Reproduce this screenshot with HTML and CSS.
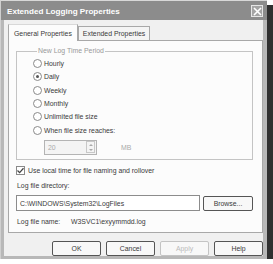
FILE: index.html
```html
<!DOCTYPE html>
<html lang="en">
<head>
    <meta charset="UTF-8">
    <title>Extended Logging Properties</title>
    <link rel="stylesheet" href="styles.css">
</head>
<body>

    <div class="window">
        <div class="titlebar">
            <span class="title">Extended Logging Properties</span>
            <span class="close">
                <svg width="9" height="9" viewBox="0 0 9 9"><path d="M1 1 L8 8 M8 1 L1 8" stroke="#fff" stroke-width="1.6"/></svg>
            </span>
        </div>

        <div class="client">
            <div class="tabs">
                <div class="tab active">General Properties</div>
                <div class="tab">Extended Properties</div>
            </div>

            <div class="panel">
                <fieldset class="group">
                    <legend>New Log Time Period</legend>
                    <div class="radio"><span class="dot"></span>Hourly</div>
                    <div class="radio checked"><span class="dot"></span>Daily</div>
                    <div class="radio"><span class="dot"></span>Weekly</div>
                    <div class="radio"><span class="dot"></span>Monthly</div>
                    <div class="radio"><span class="dot"></span>Unlimited file size</div>
                    <div class="radio"><span class="dot"></span>When file size reaches:</div>
                    <div class="size-row">
                        <div class="spin">
                            <span class="spin-val">20</span>
                            <span class="spin-btns">
                                <span class="arrow up"></span>
                                <span class="arrow down"></span>
                            </span>
                        </div>
                        <span class="unit">MB</span>
                    </div>
                </fieldset>

                <div class="check">
                    <span class="box">
                        <svg width="7" height="7" viewBox="0 0 7 7"><path d="M0.5 3.5 L2.6 5.6 L6.5 1.2" fill="none" stroke="#444" stroke-width="1.3"/></svg>
                    </span>
                    Use local time for file naming and rollover
                </div>

                <div class="field-label">Log file directory:</div>
                <div class="dir-row">
                    <div class="input">C:\WINDOWS\System32\LogFiles</div>
                    <div class="btn">Browse...</div>
                </div>

                <div class="name-row">
                    <span class="name-label">Log file name:</span>
                    <span>W3SVC1\exyymmdd.log</span>
                </div>
            </div>

            <div class="buttons">
                <div class="btn">OK</div>
                <div class="btn">Cancel</div>
                <div class="btn disabled">Apply</div>
                <div class="btn">Help</div>
            </div>
        </div>
    </div>

</body>
</html>
```

FILE: styles.css
```css
body {
    margin: 0;
    background: #fff;
    font-family: "Liberation Sans", Arial, sans-serif;
    font-size: 6.9px;
    color: #3a3a3a;
}

.window {
    width: 267px;
    height: 259px;
    box-sizing: border-box;
    display: flex;
    flex-direction: column;
    background: #b8b8b8;
    border-top: 1px solid #d8d8d8;
    border-left: 1px solid #d0d0d0;
    padding: 0 4px 3px 3px;
    box-shadow: 6px 5px 0 #303030;
}

    .titlebar {
        height: 20px;
        margin: 0 -4px 0 -3px;
        padding: 1px 4px 0 6px;
        box-sizing: border-box;
        background: #8c8c8c;
        display: flex;
        align-items: center;
        justify-content: space-between;
    }

    .title {
        color: #fff;
        font-weight: bold;
        font-size: 8.1px;
    }

    .close {
        width: 12px;
        height: 12px;
        box-sizing: border-box;
        border: 1px solid #e6e6e6;
        background: #a4a4a4;
        display: flex;
        align-items: center;
        justify-content: center;
    }

.client {
    flex: 1;
    background: #f0f0f0;
    padding: 3px 0 0 4px;
    display: flex;
    flex-direction: column;
}

.tabs {
    display: flex;
    align-items: flex-end;
    height: 17px;
}

    .tab {
        height: 13px;
        padding: 0 4px;
        display: flex;
        align-items: center;
        border: 1px solid #a8a8a8;
        border-bottom: none;
        background: #f4f4f4;
    }

    .tab.active {
        height: 16px;
        background: #fcfcfc;
        border-top-color: #d8d8d8;
        position: relative;
        z-index: 1;
        margin-bottom: -1px;
        padding: 0 5px;
    }

.panel {
    height: 193px;
    box-sizing: border-box;
    border: 1px solid #a8a8a8;
    background: #fcfcfc;
    padding: 5px 9px 0 7px;
}

.group {
    margin: 0;
    padding: 1px 0 0 16px;
    border: 1px solid #c4c4c4;
    height: 114px;
    box-sizing: border-box;
}

    .group legend {
        color: #999;
        padding: 0 1px;
        margin-left: 4px;
        line-height: 10px;
    }

.radio {
    height: 13.3px;
    display: flex;
    align-items: center;
    gap: 2px;
}

    .radio .dot {
        width: 9px;
        height: 9px;
        box-sizing: border-box;
        border: 1px solid #8a8a8a;
        border-radius: 50%;
        background: #fff;
        display: flex;
        align-items: center;
        justify-content: center;
    }

    .radio.checked .dot::after {
        content: "";
        width: 3px;
        height: 3px;
        border-radius: 50%;
        background: #555;
    }

.size-row {
    display: flex;
    align-items: center;
    margin: 3px 0 0 11px;
    gap: 24px;
}

.spin {
    width: 53px;
    height: 15px;
    box-sizing: border-box;
    border: 1px solid #b4b4b4;
    background: #f4f4f4;
    display: flex;
    align-items: center;
    justify-content: space-between;
    padding: 0 1px 0 3px;
    color: #aaa;
}

.spin-btns {
    width: 9px;
    height: 12px;
    display: flex;
    flex-direction: column;
    border: 1px solid #c8c8c8;
    box-sizing: border-box;
}

    .arrow {
        flex: 1;
        display: flex;
        align-items: center;
        justify-content: center;
    }

    .arrow.up::after {
        content: "";
        border: 2px solid transparent;
        border-bottom: 2px solid #aaa;
        border-top: none;
    }

    .arrow.down::after {
        content: "";
        border: 2px solid transparent;
        border-top: 2px solid #aaa;
        border-bottom: none;
    }

.unit {
    color: #aaa;
}

.check {
    margin-top: 5px;
    height: 10px;
    display: flex;
    align-items: center;
    gap: 3px;
}

    .check .box {
        width: 9px;
        height: 9px;
        box-sizing: border-box;
        border: 1px solid #8a8a8a;
        background: #fff;
        display: flex;
        align-items: center;
        justify-content: center;
    }

.field-label {
    margin-top: 6px;
    line-height: 10px;
    padding-left: 1px;
}

.dir-row {
    display: flex;
    gap: 3px;
    margin-top: 4px;
    align-items: flex-start;
}

.input {
    width: 184px;
    height: 16px;
    box-sizing: border-box;
    border: 1px solid #8c8c8c;
    background: #fff;
    padding-left: 3px;
    display: flex;
    align-items: center;
}

.btn {
    height: 15px;
    box-sizing: border-box;
    border: 1px solid #555;
    border-radius: 2px;
    background: #f8f8f8;
    display: flex;
    align-items: center;
    justify-content: center;
}

.dir-row .btn {
    width: 50px;
    margin-top: 1px;
}

.name-row {
    margin-top: 6px;
    display: flex;
    line-height: 10px;
    padding-left: 1px;
}

    .name-label {
        width: 54px;
    }

.buttons {
    display: flex;
    justify-content: flex-end;
    gap: 5px;
    margin-top: 8px;
}

    .buttons .btn {
        width: 49px;
    }

    .btn.disabled {
        color: #bbb;
        border-color: #c4c4c4;
    }
```
